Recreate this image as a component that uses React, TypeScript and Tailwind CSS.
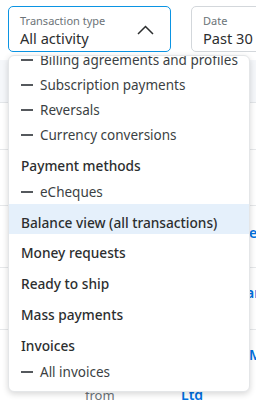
import { ChevronDown } from 'lucide-react';

type MenuItem = {
  label: string;
  kind: 'sub' | 'top' | 'group';
  active?: boolean;
};

const menuItems: MenuItem[] = [
  { label: 'Billing agreements and profiles', kind: 'sub' },
  { label: 'Subscription payments', kind: 'sub' },
  { label: 'Reversals', kind: 'sub' },
  { label: 'Currency conversions', kind: 'sub' },
  { label: 'Payment methods', kind: 'group' },
  { label: 'eCheques', kind: 'sub' },
  { label: 'Balance view (all transactions)', kind: 'top', active: true },
  { label: 'Money requests', kind: 'top' },
  { label: 'Ready to ship', kind: 'top' },
  { label: 'Mass payments', kind: 'top' },
  { label: 'Invoices', kind: 'group' },
  { label: 'All invoices', kind: 'sub' },
  { label: 'Paid invoices', kind: 'sub' },
];

const FilterBox = ({
  label,
  value,
  open = false,
  className = '',
}: {
  label: string;
  value: string;
  open?: boolean;
  className?: string;
}) => (
  <div
    className={
      'shrink-0 h-[46px] rounded-[5px] bg-white flex items-start justify-between pl-[11px] pr-[16px] pt-[7px] ' +
      (open ? 'border border-[#0b94e3]' : 'border border-[#d3d7db]') +
      ' ' +
      className
    }
  >
    <div className="flex flex-col whitespace-nowrap">
      <span className="text-[11px] leading-[14px] text-[#6c7378]">{label}</span>
      <span className="text-[14.6px] leading-[20px] text-[#2c2e2f]">{value}</span>
    </div>
    {open ? (
      <svg width="17" height="10" viewBox="0 0 17 10" className="mt-[11px]" fill="none">
        <path d="M1 9 L8.5 1.5 L16 9" stroke="#2c2e2f" strokeWidth="1.5" />
      </svg>
    ) : (
      <ChevronDown className="h-4 w-4 mt-[16px] text-[#2c2e2f]" />
    )}
  </div>
);

export default function App() {
  return (
    <div className="relative w-[256px] h-[400px] overflow-hidden bg-white font-['Noto_Sans',sans-serif]">
      {/* filters */}
      <div className="flex gap-[20px] pl-[8px] pt-[6px]">
        <FilterBox label="Transaction type" value="All activity" open className="w-[163px]" />
        <FilterBox label="Date" value="Past 30" className="w-[180px]" />
      </div>

      {/* activity table behind the menu */}
      <div className="mt-[8px]">
        <div className="h-[43px] bg-[#f5f7fa] border-b border-[#e3e6e9]" />
        <div className="h-[47px] border-b border-[#e6e8ea]" />
        <div className="h-[56px] border-b border-[#e6e8ea]" />
        <div className="h-[62px] border-b border-[#e6e8ea] pl-[249px] pt-[17px] text-[14px] leading-[20px] font-semibold text-[#0070e0] whitespace-nowrap">
          en
        </div>
        <div className="h-[62px] border-b border-[#e6e8ea] pl-[246px] pt-[15px] text-[14px] leading-[20px] font-semibold text-[#0070e0] whitespace-nowrap">
          ar
        </div>
        <div className="flex">
          <div className="w-[173px] shrink-0 pt-[55px] pl-[85px] text-[13px] leading-[20px] text-[#6c7378]">
            from
          </div>
          <div className="pt-[15px] pl-[8px] text-[14px] leading-[20px] font-semibold text-[#0070e0] whitespace-nowrap">
            <div className="pl-[68px]">M</div>
            <div className="h-[20px]" />
            <div>Ltd</div>
          </div>
        </div>
      </div>

      {/* open dropdown menu */}
      <div className="absolute left-[8px] top-[55px] w-[242px] h-[337px] overflow-hidden rounded-[6px] bg-white border border-[#e4e6e8] shadow-[0_2px_6px_rgba(0,0,0,0.16)]">
        <ul className="-mt-[9px]">
          {menuItems.map((item) => {
            if (item.kind === 'sub') {
              return (
                <li
                  key={item.label}
                  className="h-[25px] flex items-center gap-[7px] pl-[12px] text-[13.5px] leading-[20px] text-[#3b3f43] whitespace-nowrap"
                >
                  <span className="w-[12px] h-[2px] bg-[#55595d] shrink-0" />
                  {item.label}
                </li>
              );
            }
            if (item.kind === 'group') {
              return (
                <li
                  key={item.label}
                  className="h-[32px] pt-[9px] pl-[12px] text-[13.7px] leading-[20px] font-medium text-[#2c2e2f] whitespace-nowrap"
                >
                  {item.label}
                </li>
              );
            }
            return (
              <li
                key={item.label}
                className={
                  'pt-[9px] pl-[12px] text-[13.7px] leading-[20px] font-medium text-[#2c2e2f] whitespace-nowrap ' +
                  (item.active ? 'h-[30px] bg-[#e5f0fb]' : 'h-[31px]')
                }
              >
                {item.label}
              </li>
            );
          })}
        </ul>
      </div>
    </div>
  );
}
